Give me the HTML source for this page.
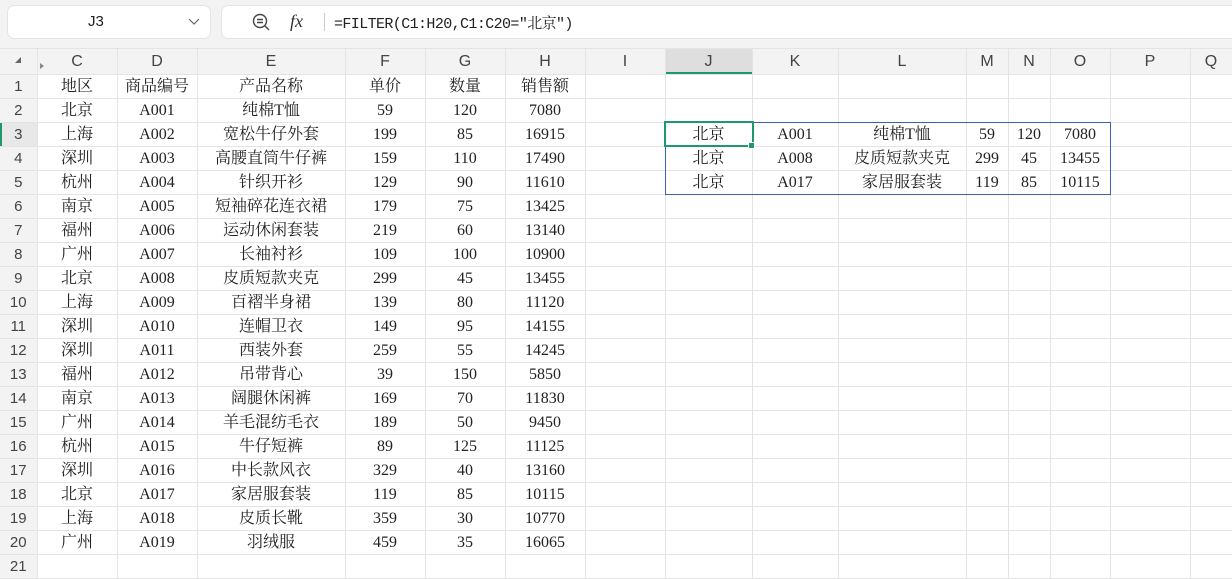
<!DOCTYPE html>
<html><head><meta charset="utf-8"><style>
body{margin:0;width:1232px;height:576px;overflow:hidden;background:#fff;font-family:"Liberation Sans","Noto Sans CJK SC",sans-serif;position:relative}
.top{position:absolute;left:0;top:0;width:1232px;height:48px;background:#f3f3f3}
.nb{position:absolute;left:8px;top:6px;width:202px;height:32px;background:#fff;border-radius:6px;box-shadow:0 0 0 1px #e4e4e4}
.nb span{position:absolute;left:80px;top:7px;font-size:15px;color:#222}
.fb{position:absolute;left:222px;top:6px;width:1020px;height:32px;background:#fff;border-radius:6px;box-shadow:0 0 0 1px #e4e4e4}
.fm{position:absolute;left:112px;top:6px;font-family:"Liberation Mono","Noto Serif CJK SC",monospace;font-size:15px;color:#222;letter-spacing:-0.6px}
table{position:absolute;left:0;top:48px;border-collapse:collapse;table-layout:fixed;width:1232px}
td{border:1px solid #e4e4e4;height:22px;line-height:22px;padding:1px 0 0 0;text-align:center;font-family:"Liberation Serif","Noto Serif CJK SC",serif;font-size:16px;color:#222;white-space:nowrap;overflow:hidden}
tr.h td{height:25px;line-height:25px;padding:0;background:#f3f3f3;font-family:"Liberation Sans",sans-serif;color:#444;font-size:16px}
td.r{background:#f3f3f3;font-family:"Liberation Sans",sans-serif;color:#444;font-size:15px;border-left:none}
</style></head><body>
<div class="top">
<div class="nb"><span>J3</span><svg style="position:absolute;left:180px;top:12px" width="12" height="8"><path d="M1 1 L6 6 L11 1" fill="none" stroke="#666" stroke-width="1.2"/></svg></div>
<div class="fb">
<svg style="position:absolute;left:30px;top:7px" width="18" height="18"><circle cx="8" cy="8" r="6.5" fill="none" stroke="#444" stroke-width="1.4"/><path d="M5 6.5h6M5 9.5h6M13 13l4 4" stroke="#444" stroke-width="1.4"/></svg>
<span style="position:absolute;left:68px;top:5px;font-family:'Liberation Serif',serif;font-style:italic;font-size:18px;color:#333">fx</span>
<div style="position:absolute;left:102px;top:7px;width:1px;height:18px;background:#ccc"></div>
<span class="fm">=FILTER(C1:H20,C1:C20=″北京″)</span></div>
</div>
<table>
<colgroup><col style="width:37px"><col style="width:80px"><col style="width:80px"><col style="width:148px"><col style="width:80px"><col style="width:80px"><col style="width:80px"><col style="width:80px"><col style="width:87px"><col style="width:86px"><col style="width:128px"><col style="width:42px"><col style="width:42px"><col style="width:60px"><col style="width:80px"><col style="width:42px"></colgroup>
<tr class="h"><td class="r"></td><td>C</td><td>D</td><td>E</td><td>F</td><td>G</td><td>H</td><td>I</td><td style="background:#dedede;box-shadow:inset 0 -2px 0 #1e9a6a">J</td><td>K</td><td>L</td><td>M</td><td>N</td><td>O</td><td>P</td><td>Q</td></tr>
<tr><td class="r">1</td><td>地区</td><td>商品编号</td><td>产品名称</td><td>单价</td><td>数量</td><td>销售额</td><td></td><td></td><td></td><td></td><td></td><td></td><td></td><td></td><td></td></tr>
<tr><td class="r">2</td><td>北京</td><td>A001</td><td>纯棉T恤</td><td>59</td><td>120</td><td>7080</td><td></td><td></td><td></td><td></td><td></td><td></td><td></td><td></td><td></td></tr>
<tr><td class="r" style="box-shadow:inset 2px 0 0 #1e9a6a;background:#e8e8e8">3</td><td>上海</td><td>A002</td><td>宽松牛仔外套</td><td>199</td><td>85</td><td>16915</td><td></td><td>北京</td><td>A001</td><td>纯棉T恤</td><td>59</td><td>120</td><td>7080</td><td></td><td></td></tr>
<tr><td class="r">4</td><td>深圳</td><td>A003</td><td>高腰直筒牛仔裤</td><td>159</td><td>110</td><td>17490</td><td></td><td>北京</td><td>A008</td><td>皮质短款夹克</td><td>299</td><td>45</td><td>13455</td><td></td><td></td></tr>
<tr><td class="r">5</td><td>杭州</td><td>A004</td><td>针织开衫</td><td>129</td><td>90</td><td>11610</td><td></td><td>北京</td><td>A017</td><td>家居服套装</td><td>119</td><td>85</td><td>10115</td><td></td><td></td></tr>
<tr><td class="r">6</td><td>南京</td><td>A005</td><td>短袖碎花连衣裙</td><td>179</td><td>75</td><td>13425</td><td></td><td></td><td></td><td></td><td></td><td></td><td></td><td></td><td></td></tr>
<tr><td class="r">7</td><td>福州</td><td>A006</td><td>运动休闲套装</td><td>219</td><td>60</td><td>13140</td><td></td><td></td><td></td><td></td><td></td><td></td><td></td><td></td><td></td></tr>
<tr><td class="r">8</td><td>广州</td><td>A007</td><td>长袖衬衫</td><td>109</td><td>100</td><td>10900</td><td></td><td></td><td></td><td></td><td></td><td></td><td></td><td></td><td></td></tr>
<tr><td class="r">9</td><td>北京</td><td>A008</td><td>皮质短款夹克</td><td>299</td><td>45</td><td>13455</td><td></td><td></td><td></td><td></td><td></td><td></td><td></td><td></td><td></td></tr>
<tr><td class="r">10</td><td>上海</td><td>A009</td><td>百褶半身裙</td><td>139</td><td>80</td><td>11120</td><td></td><td></td><td></td><td></td><td></td><td></td><td></td><td></td><td></td></tr>
<tr><td class="r">11</td><td>深圳</td><td>A010</td><td>连帽卫衣</td><td>149</td><td>95</td><td>14155</td><td></td><td></td><td></td><td></td><td></td><td></td><td></td><td></td><td></td></tr>
<tr><td class="r">12</td><td>深圳</td><td>A011</td><td>西装外套</td><td>259</td><td>55</td><td>14245</td><td></td><td></td><td></td><td></td><td></td><td></td><td></td><td></td><td></td></tr>
<tr><td class="r">13</td><td>福州</td><td>A012</td><td>吊带背心</td><td>39</td><td>150</td><td>5850</td><td></td><td></td><td></td><td></td><td></td><td></td><td></td><td></td><td></td></tr>
<tr><td class="r">14</td><td>南京</td><td>A013</td><td>阔腿休闲裤</td><td>169</td><td>70</td><td>11830</td><td></td><td></td><td></td><td></td><td></td><td></td><td></td><td></td><td></td></tr>
<tr><td class="r">15</td><td>广州</td><td>A014</td><td>羊毛混纺毛衣</td><td>189</td><td>50</td><td>9450</td><td></td><td></td><td></td><td></td><td></td><td></td><td></td><td></td><td></td></tr>
<tr><td class="r">16</td><td>杭州</td><td>A015</td><td>牛仔短裤</td><td>89</td><td>125</td><td>11125</td><td></td><td></td><td></td><td></td><td></td><td></td><td></td><td></td><td></td></tr>
<tr><td class="r">17</td><td>深圳</td><td>A016</td><td>中长款风衣</td><td>329</td><td>40</td><td>13160</td><td></td><td></td><td></td><td></td><td></td><td></td><td></td><td></td><td></td></tr>
<tr><td class="r">18</td><td>北京</td><td>A017</td><td>家居服套装</td><td>119</td><td>85</td><td>10115</td><td></td><td></td><td></td><td></td><td></td><td></td><td></td><td></td><td></td></tr>
<tr><td class="r">19</td><td>上海</td><td>A018</td><td>皮质长靴</td><td>359</td><td>30</td><td>10770</td><td></td><td></td><td></td><td></td><td></td><td></td><td></td><td></td><td></td></tr>
<tr><td class="r">20</td><td>广州</td><td>A019</td><td>羽绒服</td><td>459</td><td>35</td><td>16065</td><td></td><td></td><td></td><td></td><td></td><td></td><td></td><td></td><td></td></tr>
<tr><td class="r">21</td><td></td><td></td><td></td><td></td><td></td><td></td><td></td><td></td><td></td><td></td><td></td><td></td><td></td><td></td><td></td></tr>
</table>
<div style="position:absolute;left:665px;top:122px;width:444px;height:71px;border:1px solid #3a62b0"></div>
<div style="position:absolute;left:664px;top:121px;width:86px;height:22px;border:2px solid #1e9a6a"></div>
<div style="position:absolute;left:748px;top:142px;width:5px;height:5px;background:#1e9a6a;border:1px solid #fff"></div>
<svg style="position:absolute;left:14px;top:56px" width="8" height="8"><path d="M7 1V7H1Z" fill="#666"/></svg>
<svg style="position:absolute;left:39px;top:62px" width="6" height="8"><path d="M1 1L5 4L1 7Z" fill="#888"/></svg>
</body></html>
